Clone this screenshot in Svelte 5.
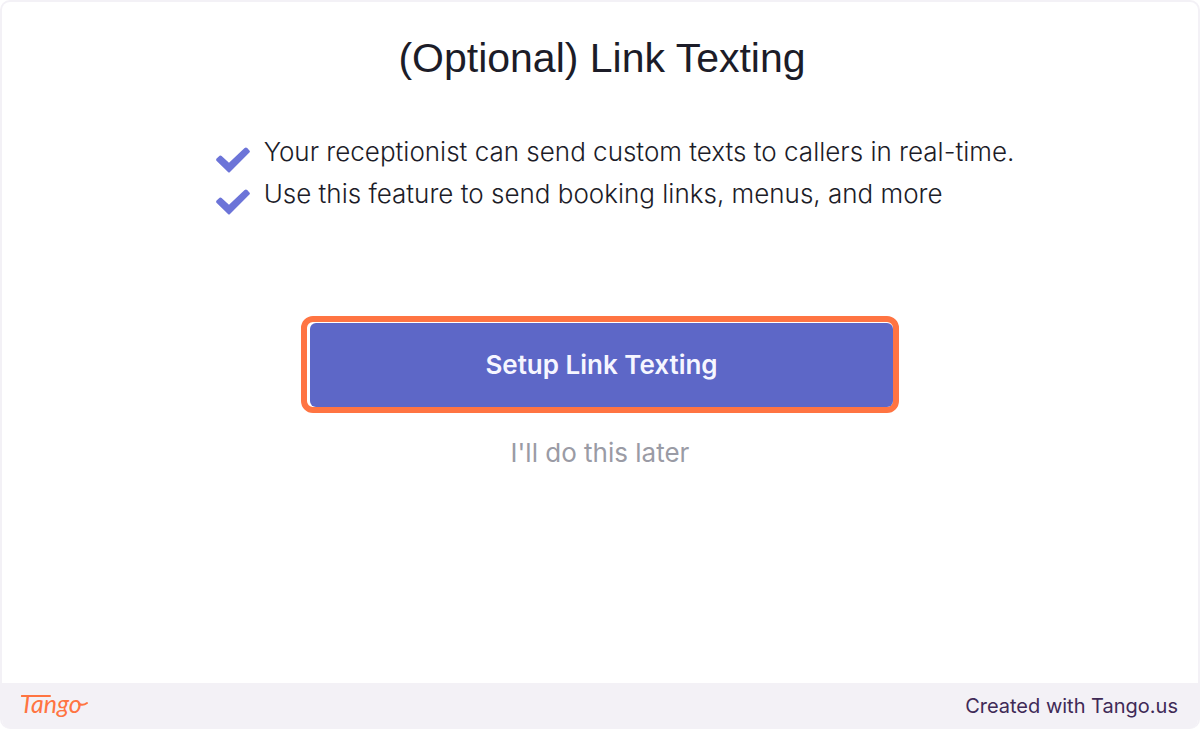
<script>
  const title = "(Optional) Link Texting";
  const benefits = [
    "Your receptionist can send custom texts to callers in real-time.",
    "Use this feature to send booking links, menus, and more",
  ];
</script>

<div class="frame">
  <main class="step">
    <h1 class="step__title">{title}</h1>

    <ul class="benefits">
      {#each benefits as benefit}
        <li class="benefits__item">
          <svg class="benefits__check" viewBox="0 0 34 26" aria-hidden="true">
            <path d="M0.6 11.6 L3.6 8.8 Q4.6 8 5.6 8.9 L13 15.8 L28.6 1 Q30 0 31.2 1.1 L33.4 3.4 Q34.4 4.5 33.4 5.6 L14 25 Q13 26 12 25 L0.7 14 Q-0.4 12.8 0.6 11.6 Z" />
          </svg>
          <span>{benefit}</span>
        </li>
      {/each}
    </ul>

    <div class="highlight">
      <button class="setup" type="button">Setup Link Texting</button>
    </div>
    <button class="later" type="button">I'll do this later</button>
  </main>

  <footer class="footer">
    <svg class="footer__logo" viewBox="0 0 72 40" role="img" aria-label="Tango">
      <text x="0" y="27">Tango</text>
      <path d="M2 10 H30" />
      <path d="M59 18 Q63 20 67 17" />
    </svg>
    <span class="footer__credit">Created with Tango.us</span>
  </footer>
</div>

<style>
  :global(body) {
    margin: 0;
    background: #fff;
  }
  .frame {
    box-sizing: border-box;
    min-height: 100vh;
    display: flex;
    flex-direction: column;
    border: 2px solid #f3f1f6;
    border-bottom: 0;
    border-radius: 10px;
    overflow: hidden;
    background: #fff;
    color: #1c1c28;
    font-family: Inter, "Open Sans", sans-serif;
  }
  .step {
    flex: 1;
    display: flex;
    flex-direction: column;
    align-items: center;
    padding: 32px 0;
  }
  .step__title {
    margin: 0;
    padding-left: 4px;
    font: 400 41px/48px "Liberation Sans", Arial, sans-serif;
  }
  .benefits {
    margin: 49px 0 0;
    padding: 0 0 0 30px;
    list-style: none;
  }
  .benefits__item {
    display: flex;
    align-items: center;
    gap: 14px;
    font-size: 26px;
    font-weight: 300;
    line-height: 42px;
  }
  .benefits__check {
    flex: none;
    width: 34px;
    height: 26px;
    margin-top: 16px;
  }
  .benefits__check path {
    fill: #6c74d8;
  }
  .highlight {
    box-sizing: border-box;
    width: 50%;
    margin-top: 101px;
    padding: 1px 0 0 3px;
    border: 6px solid #ff7442;
    border-radius: 12px;
  }
  .setup {
    display: block;
    width: 100%;
    height: 84px;
    border: 0;
    border-radius: 6px;
    background: #5d67c7;
    color: #f6f6ff;
    font: 600 26px/32px Inter, "Open Sans", sans-serif;
  }
  .later {
    margin-top: 20px;
    padding: 0;
    border: 0;
    background: none;
    color: #9a9ba5;
    font: 400 26px/40px Inter, "Open Sans", sans-serif;
  }
  .footer {
    display: flex;
    align-items: center;
    justify-content: space-between;
    height: 46px;
    padding: 0 20px 0 18px;
    background: #f3f1f6;
  }
  .footer__logo {
    width: 72px;
    height: 40px;
    overflow: visible;
  }
  .footer__logo text {
    fill: #ff7442;
    font: italic 400 25px Lato, sans-serif;
  }
  .footer__logo path {
    fill: none;
    stroke: #ff7442;
    stroke-width: 2;
    stroke-linecap: round;
  }
  .footer__credit {
    color: #3f2a56;
    font: 400 20px/28px Inter, "Open Sans", sans-serif;
  }
</style>
